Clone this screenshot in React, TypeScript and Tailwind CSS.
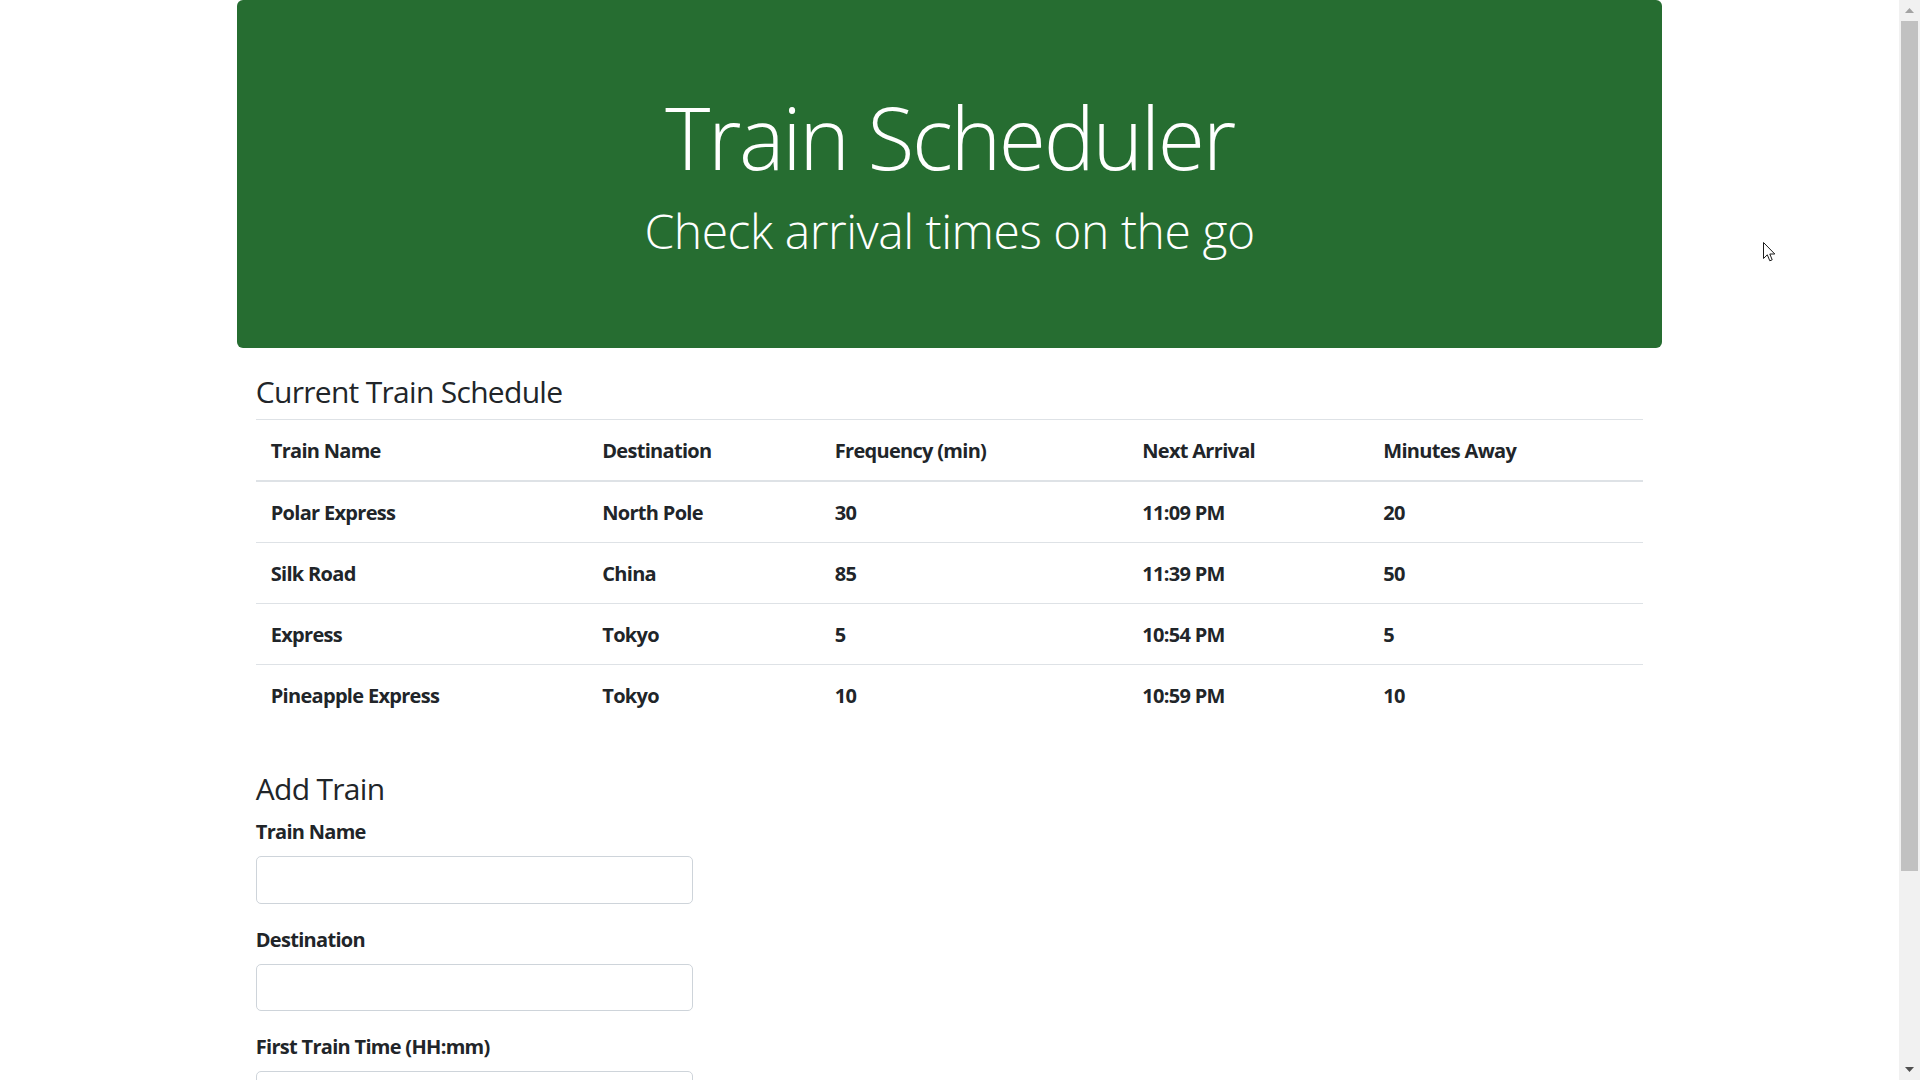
import React from "react";

const rows = [
  ["Polar Express", "North Pole", "30", "11:09 PM", "20"],
  ["Silk Road", "China", "85", "11:39 PM", "50"],
  ["Express", "Tokyo", "5", "10:54 PM", "5"],
  ["Pineapple Express", "Tokyo", "10", "10:59 PM", "10"],
];

const headers = ["Train Name", "Destination", "Frequency (min)", "Next Arrival", "Minutes Away"];

function Field({ label }: { label: string }) {
  return (
    <div className="mb-[20px]">
      <label className="block pt-[1px] mb-[9px] text-[20px] leading-[30px] font-bold tracking-[-0.7px]">
        {label}
      </label>
      <input
        type="text"
        className="block w-[437px] h-[47.5px] rounded-[5px] border border-[#ced4da] bg-white px-[15px] outline-none"
      />
    </div>
  );
}

export default function App() {
  return (
    <div
      className="relative flex h-[1080px] w-[1920px] overflow-hidden bg-white text-[#212529]"
      style={{ fontFamily: '"Open Sans", "Noto Sans", sans-serif' }}
    >
      <main className="flex-1 overflow-hidden">
        <div className="mx-auto w-[1425px]">
          <div className="flex h-[348px] flex-col items-center rounded-[6px] bg-[#266d31] pt-[94px] text-white">
            <h1 className="text-[86px] font-light leading-[86px] tracking-[-2.4px]">Train Scheduler</h1>
            <p className="mt-[27px] text-[48px] font-light leading-[48px] tracking-[-0.45px]">
              Check arrival times on the go
            </p>
          </div>

          <div className="px-[18.75px]">
            <h4 className="mt-[26px] mb-[9px] text-[30px] font-medium leading-[36px] tracking-[-0.7px]">
              Current Train Schedule
            </h4>
            <table className="w-full table-fixed border-collapse text-[20px] leading-[30px] tracking-[-0.7px]">
              <colgroup>
                <col className="w-[331.5px]" />
                <col className="w-[232.5px]" />
                <col className="w-[307.5px]" />
                <col className="w-[241px]" />
                <col />
              </colgroup>
              <thead>
                <tr>
                  {headers.map((h) => (
                    <th
                      key={h}
                      className="border-t border-b-2 border-[#dee2e6] px-[15px] pt-[15.5px] pb-[14.5px] text-left font-bold"
                    >
                      {h}
                    </th>
                  ))}
                </tr>
              </thead>
              <tbody>
                {rows.map((r) => (
                  <tr key={r[0]}>
                    {r.map((c, i) => (
                      <td
                        key={i}
                        className="border-t border-[#dee2e6] px-[15px] pt-[15.5px] pb-[14.5px] font-bold"
                      >
                        {c}
                      </td>
                    ))}
                  </tr>
                ))}
              </tbody>
            </table>

            <h4 className="mt-[46px] mb-[9px] text-[30px] font-medium leading-[36px] tracking-[-0.7px]">
              Add Train
            </h4>
            <Field label="Train Name" />
            <Field label="Destination" />
            <Field label="First Train Time (HH:mm)" />
          </div>
        </div>
      </main>

      <div className="flex h-[1080px] w-[21px] flex-col items-center bg-[#f1f1f1]">
        <div className="flex h-[21px] items-center justify-center">
          <svg width="9" height="5" viewBox="0 0 9 5">
            <path d="M0 5 L4.5 0 L9 5 Z" fill="#a3a3a3" />
          </svg>
        </div>
        <div className="h-[850px] w-[17px] bg-[#c1c1c1]" />
        <div className="flex-1" />
        <div className="flex h-[21px] items-center justify-center">
          <svg width="9" height="5" viewBox="0 0 9 5">
            <path d="M0 0 L9 0 L4.5 5 Z" fill="#505050" />
          </svg>
        </div>
      </div>

      <svg
        className="absolute left-[1763px] top-[242px]"
        width="13"
        height="21"
        viewBox="0 0 13 21"
      >
        <path
          d="M0.5 0.5 L0.5 16.5 L4.3 12.8 L6.8 18.8 L9.2 17.8 L6.8 12 L11.8 12 Z"
          fill="white"
          stroke="#1b1b1b"
          strokeWidth="1"
          strokeLinejoin="miter"
        />
      </svg>
    </div>
  );
}
